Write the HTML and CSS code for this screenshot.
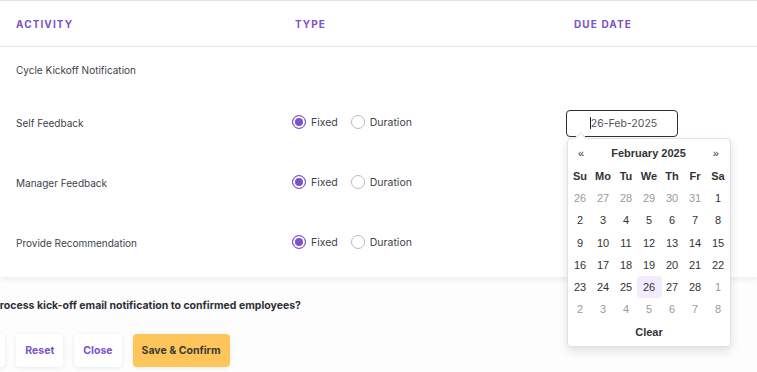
FILE: index.html
```html
<!DOCTYPE html>
<html lang="en">
  <head>
    <meta charset="UTF-8" />
    <meta name="viewport" content="width=device-width, initial-scale=1.0" />
    <title>Cycle activities</title>
    <link rel="stylesheet" href="styles.css">
  </head>
  <body>
    <section class="card">
      <div class="grid head">
        <div>Activity</div>
        <div>Type</div>
        <div>Due Date</div>
      </div>

      <div class="grid row first">
        <div>Cycle Kickoff Notification</div>
        <div></div>
        <div></div>
      </div>

      <div class="grid row">
        <div>Self Feedback</div>
        <div class="types">
          <label class="radio checked"><span class="dot"></span>Fixed</label>
          <label class="radio"><span class="dot"></span>Duration</label>
        </div>
        <div class="dateCell">
          <div class="dateInput"><span class="caret"></span>26-Feb-2025</div>

          <div class="picker">
            <div class="pickerHead">
              <span>&laquo;</span>
              <b>February 2025</b>
              <span>&raquo;</span>
            </div>
            <div class="days">
              <b>Su</b><b>Mo</b><b>Tu</b><b>We</b><b>Th</b><b>Fr</b><b>Sa</b>
              <span class="old">26</span><span class="old">27</span><span class="old">28</span><span class="old">29</span><span class="old">30</span><span class="old">31</span><span>1</span>
              <span>2</span><span>3</span><span>4</span><span>5</span><span>6</span><span>7</span><span>8</span>
              <span>9</span><span>10</span><span>11</span><span>12</span><span>13</span><span>14</span><span>15</span>
              <span>16</span><span>17</span><span>18</span><span>19</span><span>20</span><span>21</span><span>22</span>
              <span>23</span><span>24</span><span>25</span><span class="active">26</span><span>27</span><span>28</span><span class="old">1</span>
              <span class="old">2</span><span class="old">3</span><span class="old">4</span><span class="old">5</span><span class="old">6</span><span class="old">7</span><span class="old">8</span>
            </div>
            <div class="clear">Clear</div>
          </div>
        </div>
      </div>

      <div class="grid row">
        <div>Manager Feedback</div>
        <div class="types">
          <label class="radio checked"><span class="dot"></span>Fixed</label>
          <label class="radio"><span class="dot"></span>Duration</label>
        </div>
        <div></div>
      </div>

      <div class="grid row">
        <div>Provide Recommendation</div>
        <div class="types">
          <label class="radio checked"><span class="dot"></span>Fixed</label>
          <label class="radio"><span class="dot"></span>Duration</label>
        </div>
        <div></div>
      </div>
    </section>

    <div class="footer">
      <p class="question">Process kick-off email notification to confirmed employees?</p>
      <div class="actions">
        <button class="btn">Back</button>
        <button class="btn">Reset</button>
        <button class="btn">Close</button>
        <button class="btn primary">Save &amp; Confirm</button>
      </div>
    </div>
  </body>
</html>
```

FILE: styles.css
```css
* {
  margin: 0;
  padding: 0;
  box-sizing: border-box;
}

body {
  width: 757px;
  height: 372px;
  overflow: hidden;
  background: #fdfdfd;
  font-family: Inter, "Liberation Sans", sans-serif;
  color: #3d3f4a;
}

.card {
  background: #fff;
  border-top: 1px solid #e1e5ea;
  padding-bottom: 4px;
  box-shadow: 0 3px 6px rgba(0, 0, 0, 0.06);
}

.grid {
  display: grid;
  grid-template-columns: 279px 279px 1fr;
  padding-left: 16px;
  align-items: center;
}

.head {
  height: 46px;
  border-bottom: 1px solid #e1e5ea;
  font-size: 10px;
  font-weight: 700;
  letter-spacing: 1.1px;
  text-transform: uppercase;
  color: #7b52cc;
}

.row {
  height: 60px;
  font-size: 10px;
}

.row.first {
  height: 46px;
}

.types {
  display: flex;
  gap: 13px;
  margin-left: -3px;
  margin-top: -2px;
  font-size: 10.5px;
}

.radio {
  display: flex;
  align-items: center;
  gap: 5px;
}

.radio .dot {
  width: 14px;
  height: 14px;
  border-radius: 50%;
  border: 1px solid #b9b9bf;
  background: #fff;
}

.radio.checked .dot {
  border: 1.5px solid #7b52cc;
  background: #7b52cc;
  box-shadow: inset 0 0 0 2px #fff;
}

.dateCell {
  position: relative;
  margin-left: -8px;
}

.dateInput {
  width: 112px;
  height: 27px;
  border: 1px solid #2f2f33;
  border-radius: 4px;
  display: flex;
  align-items: center;
  justify-content: center;
  padding-left: 3px;
  font-size: 10.5px;
  color: #50525c;
}

.caret {
  width: 1px;
  height: 12px;
  background: #222;
}

.picker {
  position: absolute;
  top: 28px;
  left: 1px;
  width: 164px;
  height: 209px;
  background: #fff;
  border: 1px solid #e2e2e4;
  border-radius: 4px;
  box-shadow: 0 4px 10px rgba(0, 0, 0, 0.12);
  padding: 3px 2px;
  font-family: "Liberation Sans", Arial, sans-serif;
  font-size: 11px;
  color: #333;
  z-index: 10;
}

.picker::before {
  content: "";
  position: absolute;
  top: -5px;
  left: 8px;
  width: 8px;
  height: 8px;
  background: #fff;
  border-top: 1px solid #e2e2e4;
  border-left: 1px solid #e2e2e4;
  transform: rotate(45deg);
}

.pickerHead {
  display: flex;
  justify-content: space-between;
  align-items: center;
  height: 22px;
  padding: 0 9px 0 8px;
}

.days {
  display: grid;
  grid-template-columns: repeat(7, 23px);
  grid-auto-rows: 22.3px;
  justify-content: center;
  align-items: center;
  justify-items: center;
  padding-top: 1px;
}

.days b,
.days span {
  display: flex;
  align-items: center;
  justify-content: center;
  width: 23px;
  height: 100%;
}

.days span.old {
  color: #9a9a9a;
}

.days span.active {
  background: #f1ebfd;
  border-radius: 4px;
  width: 25px;
}

.clear {
  text-align: center;
  font-weight: 700;
  margin-top: 5px;
}

.footer {
  padding-top: 22px;
}

.question {
  margin-left: -7px;
  font-size: 10.5px;
  font-weight: 700;
  color: #2e3038;
}

.actions {
  display: flex;
  gap: 11px;
  margin-top: 22px;
  margin-left: -38px;
}

.btn {
  height: 33px;
  padding: 0 9px;
  border: none;
  border-radius: 4px;
  background: #fff;
  box-shadow: 0 1px 4px rgba(0, 0, 0, 0.08);
  font-family: Inter, "Liberation Sans", sans-serif;
  font-size: 10.5px;
  font-weight: 700;
  color: #7b52cc;
}

.btn.primary {
  background: #fec65a;
  color: #3b3a37;
}
```
